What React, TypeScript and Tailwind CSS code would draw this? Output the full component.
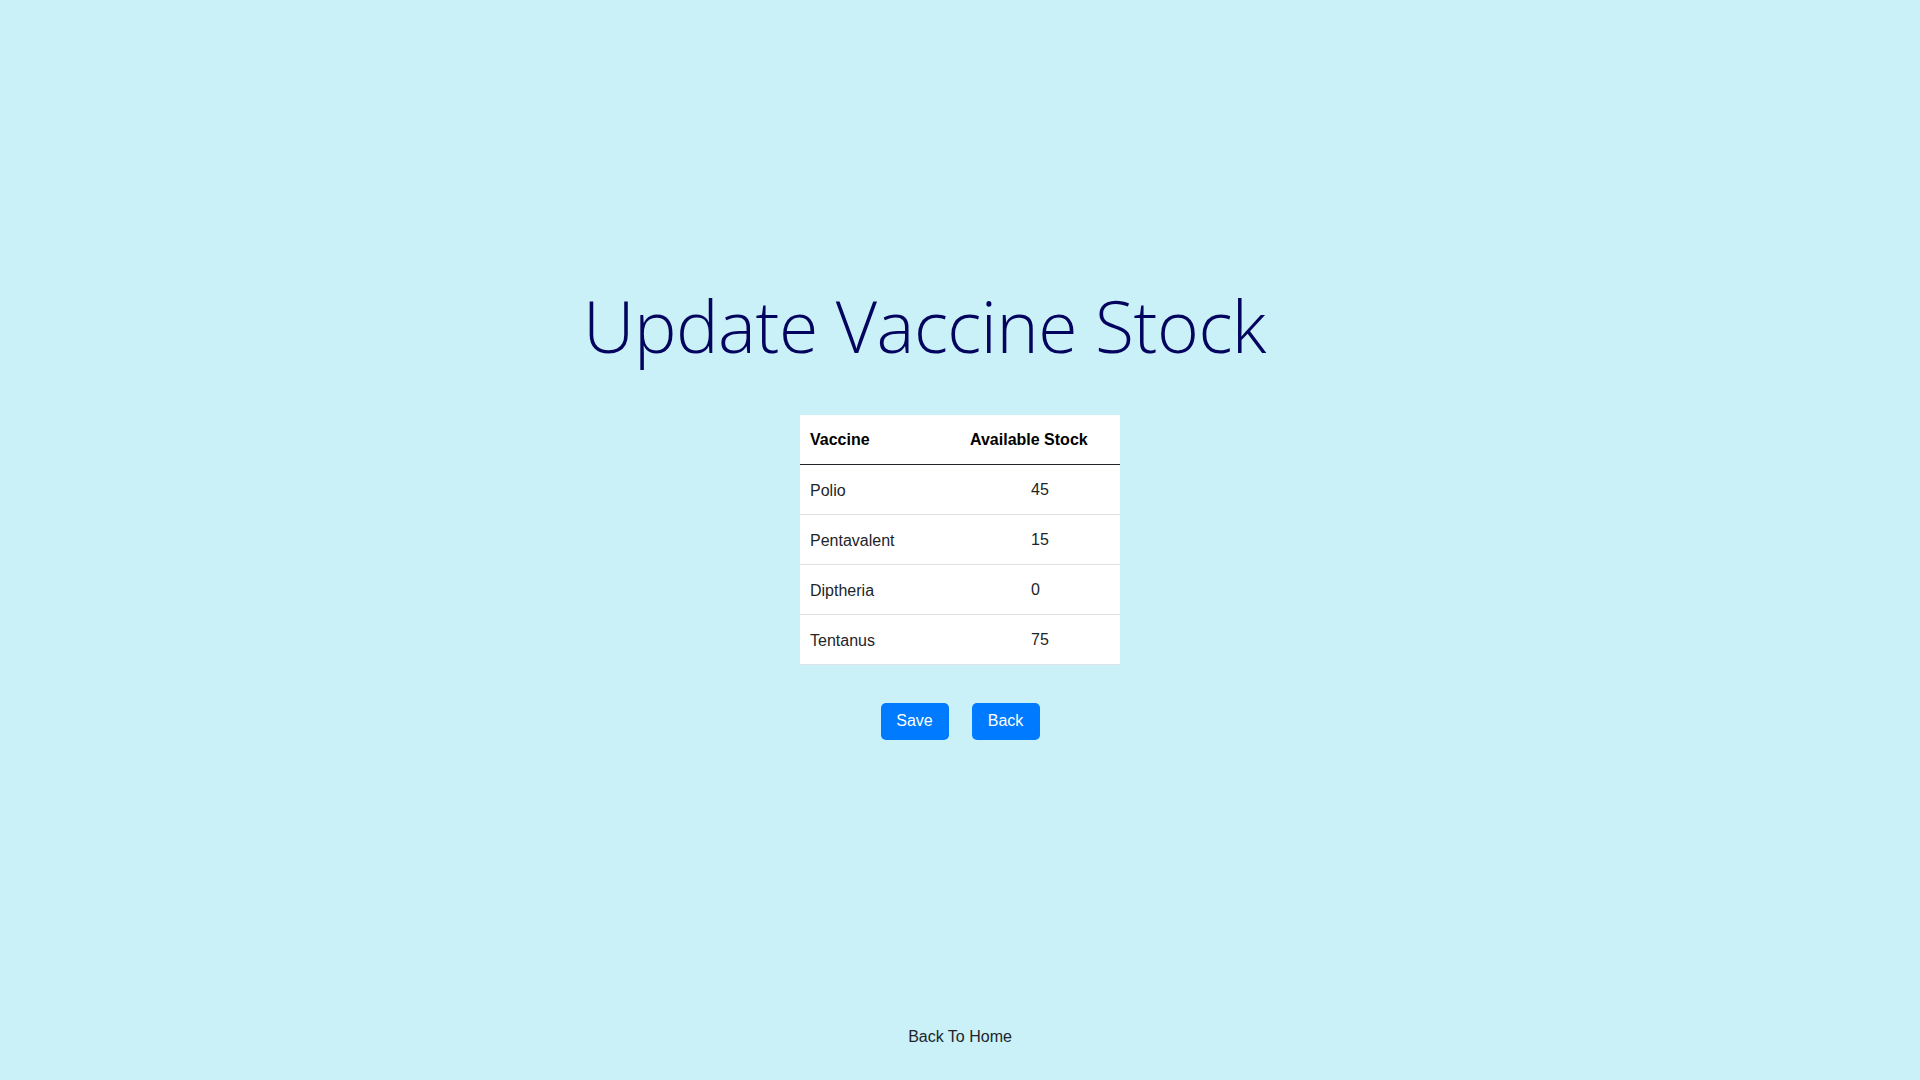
import React from "react";

const rows = [
  { name: "Polio", stock: "45" },
  { name: "Pentavalent", stock: "15" },
  { name: "Diptheria", stock: "0" },
  { name: "Tentanus", stock: "75" },
];

export default function App() {
  return (
    <div className="w-[1920px] h-[1080px] bg-[#caf0f8] flex flex-col items-center font-['Liberation_Sans',Arial,sans-serif]">
      <h1 className="mt-[279px] pr-[71px] h-[93px] text-[71.5px] leading-[93px] text-[#03045e] font-['Open_Sans','Noto_Sans',sans-serif] font-light tracking-[-0.5px] m-0">
        Update Vaccine Stock
      </h1>
      <table className="mt-[43px] w-[320px] bg-white border-collapse text-[16px] text-[#212529]">
        <thead>
          <tr className="h-[49px] border-b border-[#212529]">
            <th className="w-[158px] text-left font-bold pl-[10px] pt-[2px] align-middle text-black">Vaccine</th>
            <th className="text-left font-bold pl-[12px] pt-[2px] align-middle text-black">Available Stock</th>
          </tr>
        </thead>
        <tbody>
          {rows.map((r) => (
            <tr key={r.name} className="h-[50px] border-b border-[#dee2e6]">
              <td className="pl-[10px] pt-[3px] align-middle">{r.name}</td>
              <td className="pl-[73px] pt-[1px] align-middle">{r.stock}</td>
            </tr>
          ))}
        </tbody>
      </table>
      <div className="mt-[38px] flex gap-[23px]">
        <button className="w-[68px] h-[37px] rounded-[5px] bg-[#007bff] text-white text-[16px]">Save</button>
        <button className="w-[68px] h-[37px] rounded-[5px] bg-[#007bff] text-white text-[16px]">Back</button>
      </div>
      <div className="mt-auto mb-[31px] text-[16px] text-[#212529]">Back To Home</div>
    </div>
  );
}
